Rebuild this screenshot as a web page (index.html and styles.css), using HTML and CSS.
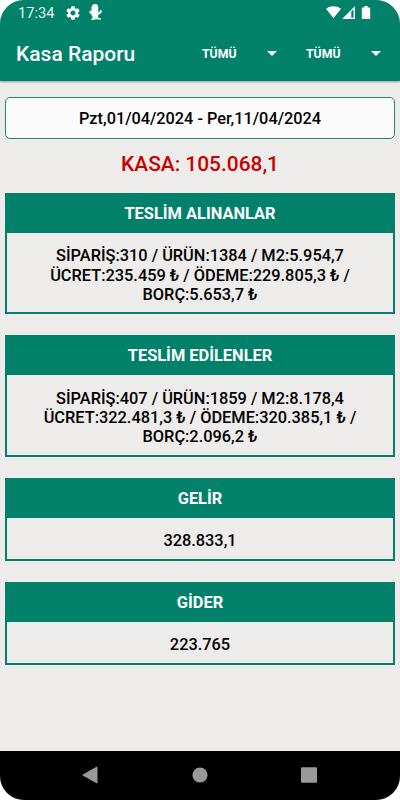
FILE: index.html
```html
<!DOCTYPE html>
<html lang="tr">
<head>
<meta charset="utf-8">
<title>Kasa Raporu</title>
<link rel="stylesheet" href="styles.css">
</head>
<body>
<div class="screen">
  <header class="header">
    <div class="status">
      <span class="clock">17:34</span>
      <svg class="gear" width="14" height="14" viewBox="2 2 20 20"><path fill="#fff" d="M19.14 12.94c.04-.3.06-.61.06-.94 0-.32-.02-.64-.07-.94l2.03-1.58c.18-.14.23-.41.12-.61l-1.92-3.32c-.12-.22-.37-.29-.59-.22l-2.39.96c-.5-.38-1.03-.7-1.62-.94l-.36-2.54c-.04-.24-.24-.41-.48-.41h-3.84c-.24 0-.43.17-.47.41l-.36 2.54c-.59.24-1.13.57-1.62.94l-2.39-.96c-.22-.08-.47 0-.59.22L2.74 8.87c-.12.21-.08.47.12.61l2.03 1.58c-.05.3-.09.63-.09.94s.02.64.07.94l-2.03 1.58c-.18.14-.23.41-.12.61l1.92 3.32c.12.22.37.29.59.22l2.39-.96c.5.38 1.03.7 1.62.94l.36 2.54c.05.24.24.41.48.41h3.84c.24 0 .44-.17.47-.41l.36-2.54c.59-.24 1.13-.56 1.62-.94l2.39.96c.22.08.47 0 .59-.22l1.92-3.32c.12-.22.07-.47-.12-.61l-2.01-1.58zM12 15.6c-1.98 0-3.6-1.62-3.6-3.6s1.62-3.6 3.6-3.6 3.6 1.62 3.6 3.6-1.62 3.6-3.6 3.6z"/></svg>
      <svg class="mascot" width="14" height="17" viewBox="0 0 14 17"><path fill="#fff" d="M3.6.9 5 0h2.2l1.4 1 .7 2v5.5l1-.4 1-1.8H13l-.2 1.5-1.6 2.2-1.9.8-.4 2.8 1.2.4 1.8.3v1.3H8.2l-1.5-1-.4 1.2H2.2v-1l1.6-.7-.6-1.8-.8-1.5-.2-1L.7 9.4.4 7l1-.4 1 1L2.5 3z"/></svg>
      <svg class="signals" width="46" height="14" viewBox="0 0 46 14"><g fill="#fff"><path d="M0 2.8C4.2-.5 10.8-.5 15 2.8L7.5 12.2z"/><path fill-rule="evenodd" d="M16 13 29 0v13zM25.3 5.6v6.1h2.2V3.3z"/><path d="M36.3 1.4h2V0h3.4v1.4h2q.5 0 .5.5v10.6q0 .5-.5.5h-7.4q-.5 0-.5-.5V1.9q0-.5.5-.5z"/></g></svg>
    </div>
    <div class="toolbar">
      <h1 class="title">Kasa Raporu</h1>
      <div class="select"><span>TÜMÜ</span><i class="caret"></i></div>
      <div class="select"><span>TÜMÜ</span><i class="caret"></i></div>
    </div>
  </header>
  <main class="content">
    <div class="dates">Pzt,01/04/2024 - Per,11/04/2024</div>
    <div class="total">KASA: 105.068,1</div>
    <section class="card">
      <h2>TESLİM ALINANLAR</h2>
      <p>SİPARİŞ:310 / ÜRÜN:1384 / M2:5.954,7<br>ÜCRET:235.459 ₺ / ÖDEME:229.805,3 ₺ /<br>BORÇ:5.653,7 ₺</p>
    </section>
    <section class="card">
      <h2>TESLİM EDİLENLER</h2>
      <p>SİPARİŞ:407 / ÜRÜN:1859 / M2:8.178,4<br>ÜCRET:322.481,3 ₺ / ÖDEME:320.385,1 ₺ /<br>BORÇ:2.096,2 ₺</p>
    </section>
    <section class="card short">
      <h2>GELİR</h2>
      <p>328.833,1</p>
    </section>
    <section class="card short">
      <h2>GİDER</h2>
      <p>223.765</p>
    </section>
  </main>
  <nav class="navbar">
    <svg width="16" height="18" viewBox="0 0 16 18"><path d="M.8 9 15 1v16z" fill="#999" stroke="#999" stroke-linejoin="round"/></svg>
    <svg width="16" height="18" viewBox="0 0 16 18"><circle cx="8" cy="9" r="7.6" fill="#999"/></svg>
    <svg width="16" height="18" viewBox="0 0 16 18"><rect y="1.2" width="16" height="15.6" rx="1" fill="#999"/></svg>
  </nav>
</div>
</body>
</html>
```
FILE: styles.css
```css
* { box-sizing: border-box; }
body { margin: 0; background: #fff; font-family: Roboto, "Liberation Sans", sans-serif; }
h1, h2, p { margin: 0; }
.screen { width: 400px; height: 800px; border-radius: 24px; overflow: hidden; background: #edecea; display: flex; flex-direction: column; }
.header { height: 81px; flex: none; background: #018169; color: #fff; box-shadow: 0 1px 2px rgba(0,0,0,.35); }
.status { height: 26px; display: flex; align-items: center; padding: 0 28px 0 18px; }
.clock { width: 48px; font-size: 14.6px; line-height: 26px; color: #e3f2ee; }
.gear { margin-top: -1px; }
.mascot { margin: -2px 0 0 9px; }
.signals { margin: -1px 0 0 auto; }
.toolbar { height: 55px; display: flex; align-items: center; padding-left: 16px; }
.title { width: 186px; flex: none; padding-top: 2px; font-size: 21px; font-weight: 500; line-height: 55px; white-space: nowrap; }
.select { width: 104px; flex: none; display: flex; align-items: center; font-size: 12.3px; font-weight: 700; }
.select:last-child { width: 80px; }
.select span { width: 65px; flex: none; }
.caret { width: 10px; height: 5px; flex: none; background: #fff; clip-path: polygon(0 0, 100% 0, 50% 100%); }
.content { flex: 1; padding: 16px 5px 0; text-align: center; }
.dates { height: 42px; border: 1px solid #26846c; border-radius: 5px; background: #fbfbfb; color: #000; font-size: 16.3px; font-weight: 500; line-height: 42px; white-space: nowrap; }
.total { height: 53.7px; color: #c70000; font-size: 20.9px; font-weight: 500; line-height: 51px; }
.card { height: 121.5px; margin-bottom: 21px; border: 2px solid #018169; }
.card h2 { height: 38px; background: #018169; color: #fff; font-size: 16.4px; font-weight: 700; line-height: 38px; }
.card p { padding-top: 13.7px; color: #000; font-size: 16.35px; font-weight: 500; line-height: 19.2px; white-space: nowrap; }
.card.short { height: 83px; }
.navbar { height: 49px; flex: none; background: #000; display: flex; justify-content: space-between; padding: 15px 83px 0 82px; }
```
